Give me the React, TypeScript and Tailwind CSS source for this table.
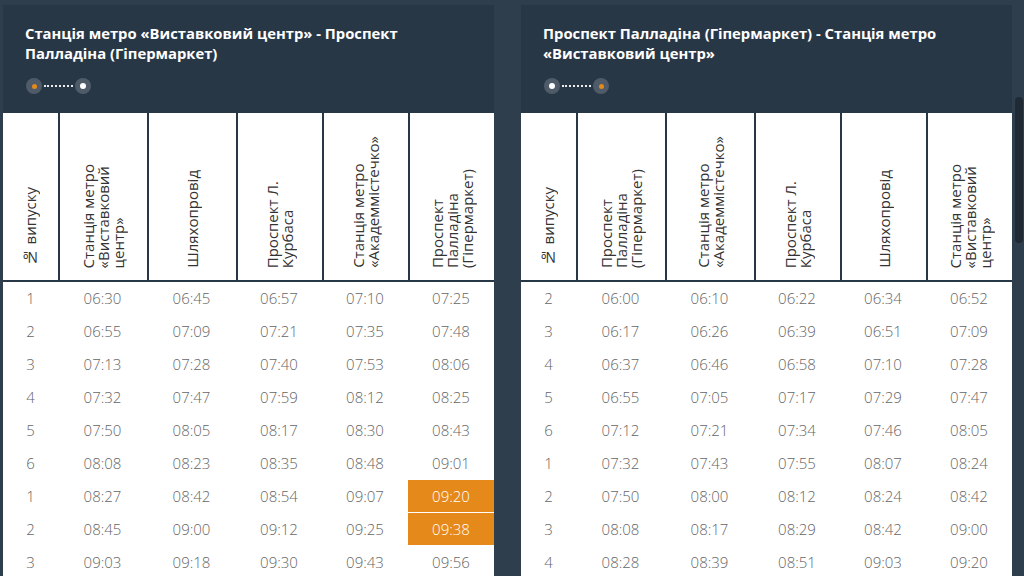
import React from 'react';

type Dir = 'forward' | 'back';

const panelBg = 'bg-[#283746]';

const leftHeaders: string[][] = [
  ['№ випуску'],
  ['Станція метро', '«Виставковий', 'центр»'],
  ['Шляхопровід'],
  ['Проспект Л.', 'Курбаса'],
  ['Станція метро', '«Академмістечко»'],
  ['Проспект', 'Палладіна', '(Гіпермаркет)'],
];

const rightHeaders: string[][] = [
  ['№ випуску'],
  ['Проспект', 'Палладіна', '(Гіпермаркет)'],
  ['Станція метро', '«Академмістечко»'],
  ['Проспект Л.', 'Курбаса'],
  ['Шляхопровід'],
  ['Станція метро', '«Виставковий', 'центр»'],
];

const leftRows: string[][] = [
  ['1', '06:30', '06:45', '06:57', '07:10', '07:25'],
  ['2', '06:55', '07:09', '07:21', '07:35', '07:48'],
  ['3', '07:13', '07:28', '07:40', '07:53', '08:06'],
  ['4', '07:32', '07:47', '07:59', '08:12', '08:25'],
  ['5', '07:50', '08:05', '08:17', '08:30', '08:43'],
  ['6', '08:08', '08:23', '08:35', '08:48', '09:01'],
  ['1', '08:27', '08:42', '08:54', '09:07', '09:20'],
  ['2', '08:45', '09:00', '09:12', '09:25', '09:38'],
  ['3', '09:03', '09:18', '09:30', '09:43', '09:56'],
];

const rightRows: string[][] = [
  ['2', '06:00', '06:10', '06:22', '06:34', '06:52'],
  ['3', '06:17', '06:26', '06:39', '06:51', '07:09'],
  ['4', '06:37', '06:46', '06:58', '07:10', '07:28'],
  ['5', '06:55', '07:05', '07:17', '07:29', '07:47'],
  ['6', '07:12', '07:21', '07:34', '07:46', '08:05'],
  ['1', '07:32', '07:43', '07:55', '08:07', '08:24'],
  ['2', '07:50', '08:00', '08:12', '08:24', '08:42'],
  ['3', '08:08', '08:17', '08:29', '08:42', '09:00'],
  ['4', '08:28', '08:39', '08:51', '09:03', '09:20'],
];

// cell widths incl. the 2px left border of the header cells
const widths = ['w-[55px]', 'w-[89px]', 'w-[89px]', 'w-[86px]', 'w-[86px]', 'w-[86px]'];

function RouteIcon({ dir }: { dir: Dir }) {
  const orange = <span className="h-[5px] w-[5px] rounded-full bg-[#e5891a]" />;
  const white = <span className="h-[6px] w-[6px] rounded-full bg-white" />;
  return (
    <div className="flex items-center">
      <span className="flex h-[16px] w-[16px] items-center justify-center rounded-full bg-[#4f5b68]">
        {dir === 'forward' ? orange : white}
      </span>
      <span className="mx-[2px] w-[29px] border-t-2 border-dotted border-white/90" />
      <span className="flex h-[16px] w-[16px] items-center justify-center rounded-full bg-[#4f5b68]">
        {dir === 'forward' ? white : orange}
      </span>
    </div>
  );
}

function Timetable({
  title,
  dir,
  headers,
  rows,
  highlight = [],
}: {
  title: string[];
  dir: Dir;
  headers: string[][];
  rows: string[][];
  highlight?: number[];
}) {
  return (
    <div className={`w-[491px] shrink-0 ${panelBg}`}>
      {/* Title + direction */}
      <div className="px-[22px] pt-[18px] pb-[19px]">
        <h2 className="text-[14.8px] font-bold leading-[20px] text-white">
          {title[0]}
          <br />
          {title[1]}
        </h2>
        <div className="mt-[15px] pl-[1px]">
          <RouteIcon dir={dir} />
        </div>
      </div>

      {/* Stops header */}
      <div className="flex h-[169px] border-b-2 border-[#283746]">
        {headers.map((lines, i) => (
          <div
            key={i}
            className={`flex ${widths[i]} items-end justify-center bg-white bg-clip-padding pb-[12px] ${i > 0 ? 'border-l-2 border-[#283746]' : ''}`}
          >
            <div className="rotate-180 whitespace-nowrap text-[15px] leading-[15px] text-[#333333] [writing-mode:vertical-rl]">
              {lines.map((l, j) => (
                <div key={j}>{l}</div>
              ))}
            </div>
          </div>
        ))}
      </div>

      {/* Times */}
      <div className="bg-white">
        {rows.map((row, r) => (
          <div key={r} className="flex h-[33px] border-b border-white">
            {row.map((cell, c) => {
              const hl = c === 5 && highlight.includes(r);
              return (
                <div
                  key={c}
                  className={`flex ${widths[c]} items-center justify-center text-[15px] font-light ${hl ? 'bg-[#e5891a] text-white' : 'text-[#666666]'}`}
                >
                  {cell}
                </div>
              );
            })}
          </div>
        ))}
      </div>
    </div>
  );
}

export default function App() {
  return (
    <div className="flex h-[576px] w-[1024px] overflow-hidden bg-[#2f3e4d] font-['Open_Sans',sans-serif]">
      <div className="flex flex-1 gap-[27px] pl-[3px] pt-[5px]">
        <Timetable
          title={['Станція метро «Виставковий центр» - Проспект', 'Палладіна (Гіпермаркет)']}
          dir="forward"
          headers={leftHeaders}
          rows={leftRows}
          highlight={[6, 7]}
        />
        <Timetable
          title={['Проспект Палладіна (Гіпермаркет) - Станція метро', '«Виставковий центр»']}
          dir="back"
          headers={rightHeaders}
          rows={rightRows}
        />
      </div>

      {/* scrollbar */}
      <div className="w-[12px] pl-[3px] pt-[97px]">
        <div className="h-[146px] w-[8px] rounded-full bg-[#1f2a35]" />
      </div>
    </div>
  );
}
